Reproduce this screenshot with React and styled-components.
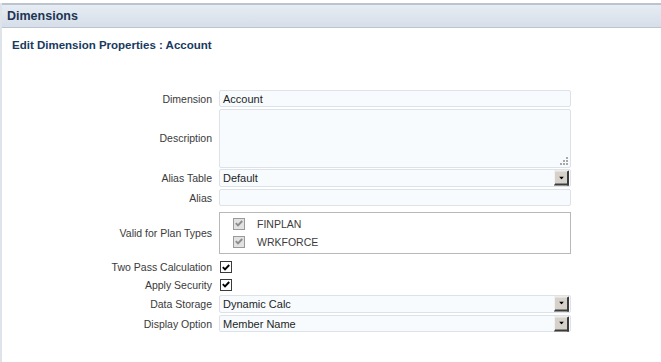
import styled, { createGlobalStyle } from "styled-components";

const GlobalStyle = createGlobalStyle`
  html, body {
    margin: 0;
    padding: 0;
    background: #ffffff;
  }
  body {
    font-family: "Liberation Sans", Arial, sans-serif;
    font-size: 10.5px;
  }
`;

const Page = styled.div`
  width: 661px;
  height: 362px;
  box-sizing: border-box;
  padding-top: 3px;
  overflow: hidden;
`;

const Panel = styled.div`
  height: 359px;
  border-left: 2px solid #dfe4ea;
  box-sizing: border-box;
`;

const Header = styled.div`
  height: 25px;
  box-sizing: border-box;
  border-top: 2px solid #bcc3cc;
  border-bottom: 1px solid #bcc4cf;
  background: linear-gradient(#e6ecf3, #d6dee9);
  display: flex;
  align-items: center;
  padding-left: 5px;
  font-weight: bold;
  font-size: 12.5px;
  color: #1c3554;
`;

const Title = styled.div`
  margin: 11px 0 0 10px;
  font-weight: bold;
  font-size: 11.5px;
  color: #173a60;
`;

const Form = styled.div`
  margin-top: 38px;
  display: grid;
  grid-template-columns: 210px 352px;
  grid-template-rows: 19px 60px 20px 19px 51px 18px 17px 21px 19px;
  column-gap: 7px;
  align-items: center;
`;

const Label = styled.div`
  text-align: right;
  color: #3a3a3a;
  white-space: nowrap;
`;

const Field = styled.div`
  height: ${({ $h }) => $h}px;
  box-sizing: border-box;
  border: 1px solid #dde2e8;
  border-radius: 2px;
  background: #f7fbfe;
  display: flex;
  align-items: center;
  padding-left: 3px;
  font-size: 11px;
  color: #1e1e1e;
  position: relative;
`;

const DropButton = styled.div`
  position: absolute;
  right: 1px;
  top: 50%;
  transform: translateY(-50%);
  width: 15px;
  height: 15px;
  box-sizing: border-box;
  background: #d6d2cb;
  border-top: 1px solid #f4f2ee;
  border-left: 1px solid #f4f2ee;
  border-right: 2px solid #3c3c3c;
  border-bottom: 2px solid #3c3c3c;
  display: flex;
  align-items: center;
  justify-content: center;
`;

const Grip = styled.svg`
  position: absolute;
  right: 2px;
  bottom: 2px;
`;

const PlanBox = styled.div`
  height: 42px;
  box-sizing: border-box;
  border: 1px solid #b8b8b8;
  background: #ffffff;
  display: flex;
  flex-direction: column;
  justify-content: center;
  gap: 6px;
  padding-left: 13px;
`;

const PlanRow = styled.div`
  display: flex;
  align-items: center;
  gap: 12px;
  color: #3c3c3c;
`;

const Box = styled.div`
  width: 12px;
  height: 12px;
  box-sizing: border-box;
  border: 1px solid ${({ $disabled }) => ($disabled ? "#9a9a9a" : "#3a3a3a")};
  background: ${({ $disabled }) => ($disabled ? "#e2e2e2" : "#ffffff")};
  display: flex;
  align-items: center;
  justify-content: center;
`;

const CheckCell = styled.div`
  display: flex;
  align-items: center;
  padding-left: 1px;
`;

function Check({ disabled }) {
  const stroke = disabled ? "#8c8c8c" : "#000000";
  return (
    <Box $disabled={disabled}>
      <svg width="8" height="7" viewBox="0 0 8 7">
        <path d="M0.8 3.2 L3 5.4 L7.2 1" fill="none" stroke={stroke} strokeWidth="1.9" />
      </svg>
    </Box>
  );
}

function Select({ value, h = 18 }) {
  return (
    <Field $h={h}>
      {value}
      <DropButton>
        <svg width="5" height="3" viewBox="0 0 5 3">
          <path d="M0 0 H5 L2.5 3 Z" fill="#000" />
        </svg>
      </DropButton>
    </Field>
  );
}

export default function App() {
  return (
    <>
      <GlobalStyle />
      <Page>
        <Panel>
          <Header>Dimensions</Header>
          <Title>Edit Dimension Properties : Account</Title>
          <Form>
            <Label>Dimension</Label>
            <Field $h={17}>Account</Field>

            <Label>Description</Label>
            <Field $h={59}>
              <Grip width="9" height="9" viewBox="0 0 9 9">
                <rect x="7" y="1" width="2" height="2" fill="#a9a9a9" />
                <rect x="4" y="4" width="2" height="2" fill="#a9a9a9" />
                <rect x="7" y="4" width="2" height="2" fill="#a9a9a9" />
                <rect x="1" y="7" width="2" height="2" fill="#a9a9a9" />
                <rect x="4" y="7" width="2" height="2" fill="#a9a9a9" />
                <rect x="7" y="7" width="2" height="2" fill="#a9a9a9" />
              </Grip>
            </Field>

            <Label>Alias Table</Label>
            <Select value="Default" />

            <Label>Alias</Label>
            <Field $h={17} />

            <Label>Valid for Plan Types</Label>
            <PlanBox>
              <PlanRow>
                <Check disabled />
                FINPLAN
              </PlanRow>
              <PlanRow>
                <Check disabled />
                WRKFORCE
              </PlanRow>
            </PlanBox>

            <Label>Two Pass Calculation</Label>
            <CheckCell>
              <Check />
            </CheckCell>

            <Label>Apply Security</Label>
            <CheckCell>
              <Check />
            </CheckCell>

            <Label>Data Storage</Label>
            <Select value="Dynamic Calc" />

            <Label>Display Option</Label>
            <Select value="Member Name" h={17} />
          </Form>
        </Panel>
      </Page>
    </>
  );
}
